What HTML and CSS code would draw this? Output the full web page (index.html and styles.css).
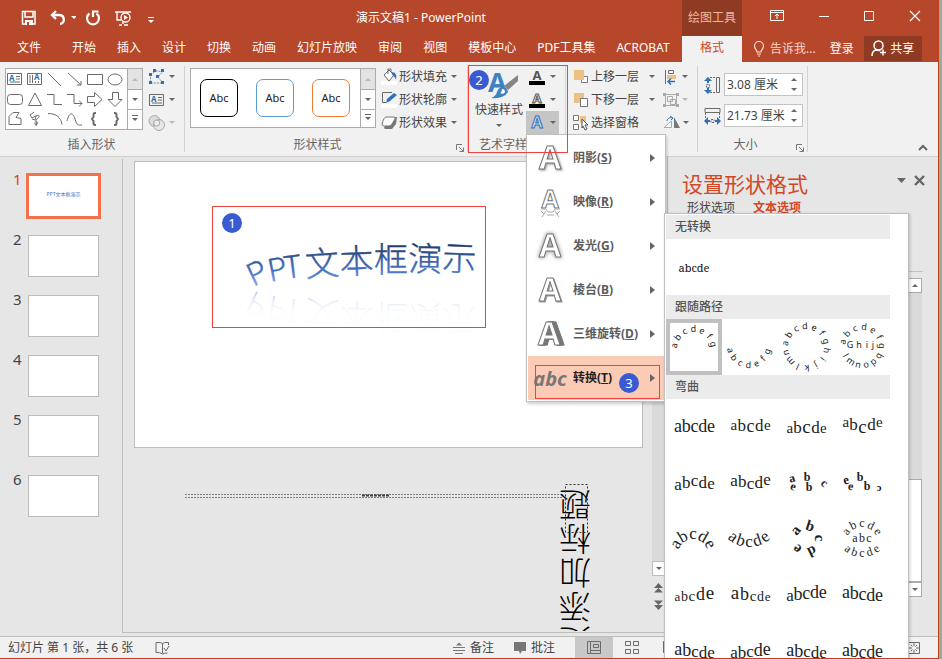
FILE: index.html
```html
<!DOCTYPE html>
<html lang="zh-CN">
<head>
<meta charset="utf-8">
<title>演示文稿1 - PowerPoint</title>
<link rel="stylesheet" href="styles.css">
</head>
<body>
<div class="app">
  <header class="header">
    <div class="header-main">
      <div class="title-row">
        <div class="quick-access">
          <button aria-label="保存"><svg width="16" height="16" viewBox="0 0 16 16"><path d="M1.500 1.500h12.500v12.500h-12.500zM4 2v5h8V2" fill="none" stroke="#fff" stroke-width="1.500"/><path d="M4 10h8v5H4z" fill="#fff"/><path d="M6 12h2v3H6z" fill="#b7472a"/></svg></button>
          <button class="wide" aria-label="撤消"><svg width="26" height="16" viewBox="0 0 26 16"><path d="M6 1 2 5l4 4M2.500 5H9c6 0 6.500 8 1 9" fill="none" stroke="#fff" stroke-width="2.300"/><path d="M21 6h6l-3 3z" fill="#fff"/></svg></button>
          <button aria-label="重复"><svg width="16" height="16" viewBox="0 0 16 16"><path d="M4.500 3.500a6 6 0 1 0 7 0M8 7V1.500h5.500" fill="none" stroke="#fff" stroke-width="2.200"/></svg></button>
          <button aria-label="从头开始"><svg width="18" height="17" viewBox="0 0 18 17"><path d="M1 2h16M3 2v8h4M9 10v4M5 15h3M10 15h4" stroke="#fff" stroke-width="1.400" fill="none"/><circle cx="11.500" cy="7.500" r="4.500" fill="#b7472a" stroke="#fff" stroke-width="1.300"/><path d="m10 5 4 2.500-4 2.500z" fill="#fff"/></svg></button>
          <button class="more" aria-label="自定义快速访问工具栏"><svg width="8" height="8" viewBox="0 0 8 8"><path d="M1 1.500h6" stroke="#fff"/><path d="M1 4h6L4 7z" fill="#fff"/></svg></button>
        </div>
        <div class="title">演示文稿1 - PowerPoint</div>
      </div>
      <nav class="tabs">
        <a href="#file" class="file">文件</a><a href="#home">开始</a><a href="#insert">插入</a><a href="#design">设计</a><a href="#transition">切换</a><a href="#animation">动画</a><a href="#show">幻灯片放映</a><a href="#review">审阅</a><a href="#view">视图</a><a href="#templates">模板中心</a><a href="#pdf">PDF工具集</a><a href="#acrobat">ACROBAT</a>
      </nav>
    </div>
    <div class="context">
      <div class="context-title">绘图工具</div>
      <a href="#format" class="context-tab">格式</a>
    </div>
    <div class="header-side">
      <div class="window-buttons">
        <button aria-label="功能区显示选项"><svg width="14" height="12" viewBox="0 0 14 12"><path d="M.5.5h13v10H.5zM1 2.500h12M7 9V4M5 6l2-2 2 2" fill="none" stroke="#fff"/></svg></button>
        <button aria-label="最小化"><svg width="12" height="12" viewBox="0 0 12 12"><path d="M1 6.500h10" stroke="#fff"/></svg></button>
        <button aria-label="最大化"><svg width="12" height="12" viewBox="0 0 12 12"><path d="M1.500 1.500h9v9h-9z" fill="none" stroke="#fff"/></svg></button>
        <button aria-label="关闭"><svg width="12" height="12" viewBox="0 0 12 12"><path d="m1 1 10 10M11 1 1 11" stroke="#fff" stroke-width="1.200"/></svg></button>
      </div>
      <div class="account">
        <button class="tell"><svg width="12" height="16" viewBox="0 0 12 16"><path d="M4 11C4 9 1.500 8 1.500 5a4.500 4.500 0 0 1 9 0C10.500 8 8 9 8 11zM4 13h4M5 15h2" fill="none" stroke="#fbe0d6" stroke-width="1.200"/></svg>告诉我...</button>
        <a href="#login" class="login">登录</a>
        <button class="share"><svg width="16" height="17" viewBox="0 0 16 17"><circle cx="7.500" cy="5.500" r="4.500" fill="none" stroke="#fff" stroke-width="1.500"/><path d="M1 16c0-4 2-6 5-6 1.500 0 2.500.5 3 1M12 9.500v6M9 12.500h6" fill="none" stroke="#fff" stroke-width="1.500"/></svg>共享</button>
      </div>
    </div>
  </header>

  <section class="ribbon">
    <div class="group g-shapes">
      <div class="group-body">
        <div class="gallery-box">
          <div class="shape-grid">
            <button aria-label="文本框"><svg viewBox="0 0 18 18"><path d="M1.500 3.500h14v11h-14zM10 6.500h4M10 9h4M4 12h10" class="ln"/><text x="3" y="11" class="blue-a">A</text></svg></button>
            <button aria-label="竖排文本框"><svg viewBox="0 0 18 18"><path d="M1.500 3.500h14v11h-14zM4 5v8M6.500 5v8M9.500 11v2M12.500 11v2" class="ln"/><text x="8" y="10" class="blue-a">A</text></svg></button>
            <button aria-label="直线"><svg viewBox="0 0 18 18"><path d="m2 3 13 13" class="ln"/></svg></button>
            <button aria-label="箭头"><svg viewBox="0 0 18 18"><path d="m2 3 13 12M15 11v4h-4" class="ln"/></svg></button>
            <button aria-label="矩形"><svg viewBox="0 0 18 18"><path d="M1.500 4.500h15v10h-15z" class="ln"/></svg></button>
            <button aria-label="椭圆"><svg viewBox="0 0 18 18"><ellipse cx="9" cy="9.500" rx="7" ry="5.500" class="ln"/></svg></button>
            <button aria-label="圆角矩形"><svg viewBox="0 0 18 18"><rect x="1.500" y="4.500" width="15" height="10" rx="3" class="ln"/></svg></button>
            <button aria-label="三角形"><svg viewBox="0 0 18 18"><path d="M9 3 2.500 15.500h13z" class="ln"/></svg></button>
            <button aria-label="肘形连接符"><svg viewBox="0 0 18 18"><path d="M1 4.500h7v10h8" class="ln"/></svg></button>
            <button aria-label="肘形箭头"><svg viewBox="0 0 18 18"><path d="M1 4.500h7v9h8M13 10.500l3 3-3 3" class="ln"/></svg></button>
            <button aria-label="右箭头"><svg viewBox="0 0 18 18"><path d="M1.500 6.500h7V2.500l7.500 7-7.500 7v-4h-7z" class="ln"/></svg></button>
            <button aria-label="下箭头"><svg viewBox="0 0 18 18"><path d="M6.500 2.500h6v7h3.500l-7 7-7-7h4.500z" class="ln"/></svg></button>
            <button aria-label="任意多边形"><svg viewBox="0 0 18 18"><path d="M3 14.500v-8l4-4h6l-3 5 5 1v6z" class="ln"/></svg></button>
            <button aria-label="自由曲线"><svg viewBox="0 0 18 18"><path d="M8 2 4 5l2 3 4-2-1 4-3-1M10 6c4-2 4 1 1 3s1 3 1 4-4 3-3 0 2-1 1 3" class="ln"/></svg></button>
            <button aria-label="弧线"><svg viewBox="0 0 18 18"><path d="M2 3.500c7 0 13 3 14 11" class="ln"/></svg></button>
            <button aria-label="曲线"><svg viewBox="0 0 18 18"><path d="M1 11c2-9 6-9 8-2s3 6 7 6" class="ln"/></svg></button>
            <button aria-label="左大括号"><svg viewBox="0 0 18 18"><path d="M10 3H9Q7.500 3 7.500 5v2L6 9l1.500 2v2q0 2 1.500 2h1" class="ln brace"/></svg></button>
            <button aria-label="右大括号"><svg viewBox="0 0 18 18"><path d="M8 3h1q1.500 0 1.500 2v2L12 9l-1.500 2v2q0 2-1.500 2H8" class="ln brace"/></svg></button>
          </div>
          <div class="stepper"><button class="off" aria-label="上一行"><i class="up"></i></button><button aria-label="下一行"><i class="down"></i></button><button aria-label="其他形状"><i class="down bar"></i></button></div>
        </div>
        <div class="tool-col">
          <button aria-label="编辑形状"><svg width="18" height="18" viewBox="0 0 18 18"><path d="M2.500 6.500 8 3l7 .5L10 9l5 6H2.500z" fill="none" stroke="#888" stroke-dasharray="2 1"/><path d="M1 5h3v3H1zM5 1h3v3H5zM13 1h3v3h-3zM8 7h3v3H8zM1 13h3v3H1zM13 13h3v3h-3z" fill="#2f72b5"/></svg><i class="down"></i></button>
          <button aria-label="文本框"><svg width="18" height="18" viewBox="0 0 18 18"><path d="M1.500 3.500h14v11h-14zM10 6.500h4M10 9h4M4 12h10" class="ln"/><text x="3" y="11" class="blue-a">A</text></svg><i class="down"></i></button>
          <button aria-label="合并形状"><svg width="18" height="18" viewBox="0 0 18 18"><circle cx="6.500" cy="7" r="5.500" fill="#dcdade" stroke="#aaa"/><circle cx="11" cy="11" r="5.500" fill="#e6e1e6" fill-opacity=".7" stroke="#aaa"/><circle cx="8.700" cy="9" r="3" fill="#eee" stroke="#aaa"/></svg><i class="down pale"></i></button>
        </div>
      </div>
      <h2>插入形状</h2>
    </div>
    <div class="group g-styles">
      <div class="group-body">
        <div class="gallery-box">
          <div class="style-list"><button class="abc black">Abc</button><button class="abc blue">Abc</button><button class="abc orange">Abc</button></div>
          <div class="stepper"><button class="off" aria-label="上一行"><i class="up"></i></button><button aria-label="下一行"><i class="down"></i></button><button aria-label="其他样式"><i class="down bar"></i></button></div>
        </div>
        <div class="command-col">
          <button><svg width="17" height="17" viewBox="0 0 17 17"><path d="M0 13h16v4H0z" fill="#fff"/><path d="m3 7 5-5 5 5-5 6zM7 6V1h3v3" fill="#fff" stroke="#666"/><path d="M10 4c5 0 6 3 5 8-1-3-2-4-3-4z" fill="#2f72b5"/></svg>形状填充<i class="down"></i></button>
          <button><svg width="17" height="17" viewBox="0 0 17 17"><path d="M0 13h16v4H0z" fill="#fff"/><path d="M11 1.500H1.500v10H5" class="ln"/><path d="m5 12 1-4 7-6 3 2-7 6z" fill="#2f72b5"/></svg>形状轮廓<i class="down"></i></button>
          <button><svg width="17" height="17" viewBox="0 0 17 17"><path d="m3 14 1-2 9-9h3l-1 7-4 5H4z" fill="#777"/><path d="M1 10q2-7 4-7h8q2 0 1 2l-3 5q-1 2-3 2H3q-2 0-2-2z" fill="#fff" stroke="#777"/></svg>形状效果<i class="down"></i></button>
        </div>
      </div>
      <h2>形状样式</h2><button class="launcher" aria-label="设置形状格式"><svg width="8" height="8" viewBox="0 0 8 8"><path d="M.5 6V.5H6M3 3l4 4M7.500 3.500v4h-4" fill="none" stroke="#777"/></svg></button>
    </div>
    <div class="group g-art">
      <div class="group-body">
        <button class="quick-style"><svg width="40" height="32" viewBox="0 0 40 32"><text x="9" y="23" class="art-a">A</text><path d="M39 6v6L29 21l-4-4z" fill="#858585"/><path d="M23 18q5 0 6 5-4 7-17 6 5-2 6-6 1-4 5-5z" fill="#3f82c0"/><path d="M23 20q3 0 3 3-1 3-5 1 2-1 2-4z" fill="#fff"/></svg><span>快速样式</span><i class="down"></i></button>
        <div class="art-col">
          <button aria-label="文本填充"><svg width="16" height="17" viewBox="0 0 16 17"><text x="8" y="12" class="fill-a">A</text><path d="M0 13h16v4H0z"/></svg><i class="down"></i></button>
          <button aria-label="文本轮廓"><svg width="16" height="17" viewBox="0 0 16 17"><text x="8" y="12" class="line-a">A</text><path d="M0 13h16v4H0z"/></svg><i class="down"></i></button>
          <button class="active" aria-label="文本效果"><svg width="16" height="17" viewBox="0 0 16 17"><text x="8" y="14" class="glow-a">A</text></svg><i class="down"></i></button>
        </div>
      </div>
      <h2>艺术字样式</h2>
    </div>
    <div class="group g-arrange">
      <div class="group-body">
        <div class="command-col">
          <button><svg width="16" height="16" viewBox="0 0 16 16"><path d="M8.500 7.500h6v6h-6z" fill="#fff" stroke="#777"/><path d="M1 1h10v10H1z" fill="#ecc183"/></svg>上移一层<i class="down"></i></button>
          <button><svg width="16" height="16" viewBox="0 0 16 16"><path d="M1 1h10v10H1z" fill="#ecc183"/><path d="M7.500 6.500h7v8h-7z" fill="#fff" stroke="#777"/></svg>下移一层<i class="down"></i></button>
          <button><svg width="16" height="16" viewBox="0 0 16 16"><path d="M.5.5h5v5h-5zM.5 9.500h5v5h-5z" fill="#fff" stroke="#777"/><path d="M7 1h6v7H7z" fill="#ecc183"/><path d="m9 4 6 6h-3l2 4-2 1-2-4-1 2z" fill="#fff" stroke="#555"/></svg>选择窗格</button>
        </div>
        <div class="tool-col">
          <button aria-label="对齐"><svg width="16" height="16" viewBox="0 0 16 16"><path d="M2.500 1v14M5.500 1.500h5v3h-5z" class="ln"/><path d="M4 6h9v4H4z" fill="#ecc183"/><path d="M12 12.500H5m3-3-3 3 3 3" fill="none" stroke="#2f72b5" stroke-width="1.500"/></svg><i class="down"></i></button>
          <button aria-label="组合"><svg width="16" height="16" viewBox="0 0 16 16"><path d="M2.500 2.500h11v11h-11zM4.500 4.500h5v5h-5zM7.500 7.500h5v5h-5z" fill="none" stroke="#aaa"/><path d="M0 1h3v3H0zM13 1h3v3h-3zM0 12h3v3H0zM13 12h3v3h-3z" fill="#aaa"/></svg><i class="down pale"></i></button>
          <button aria-label="旋转"><svg width="17" height="16" viewBox="0 0 17 16"><path d="M1 12.500h7.500V6z" fill="#fff" stroke="#aaa"/><path d="M11 13V2l6 11z" fill="#777"/><path d="M4 6c0-3 4-4 5-3M7 1l3 2-2 2" fill="none" stroke="#2f72b5"/></svg><i class="down"></i></button>
        </div>
      </div>
    </div>
    <div class="group g-size">
      <div class="group-body size-body">
        <div class="field"><label for="h" aria-label="高度"><svg width="17" height="18" viewBox="0 0 17 18"><path d="M12.500 1.500h3v15h-3z" class="ln"/><path d="M2.500 8.500h3v3h-3zM6 1.500h5M6 16.500h5" class="ln" stroke-dasharray="2 1"/><path d="M4 1 0 5h3v2h2V5h3zM4 18l-4-4h3v-2h2v2h3z" fill="#2f72b5"/></svg></label><div class="spin"><input id="h" type="text" value="3.08 厘米"><span><button aria-label="增加高度"><i class="up"></i></button><button aria-label="减小高度"><i class="down"></i></button></span></div></div>
        <div class="field"><label for="w" aria-label="宽度"><svg width="17" height="18" viewBox="0 0 17 18"><path d="M1 1.500h15v4H1z" class="ln"/><path d="M7 12.500h3v3H7zM1.500 6v5M15.500 6v5" class="ln" stroke-dasharray="2 1"/><path d="m0 14 4-4v3h2v2H4v3zM17 14l-4-4v3h-2v2h2v3z" fill="#2f72b5"/></svg></label><div class="spin"><input id="w" type="text" value="21.73 厘米"><span><button aria-label="增加宽度"><i class="up"></i></button><button aria-label="减小宽度"><i class="down"></i></button></span></div></div>
      </div>
      <h2>大小</h2><button class="launcher" aria-label="大小和位置"><svg width="8" height="8" viewBox="0 0 8 8"><path d="M.5 6V.5H6M3 3l4 4M7.500 3.500v4h-4" fill="none" stroke="#777"/></svg></button>
    </div>
    <button class="collapse" aria-label="折叠功能区"><svg width="10" height="8" viewBox="0 0 10 8"><path d="m1 6 4-4 4 4" fill="none" stroke="#666" stroke-width="2"/></svg></button>
  </section>

  <main class="workspace">
    <aside class="thumbs">
      <a href="#s1" class="thumb current"><b>1</b><span>PPT文本框演示</span></a>
      <a href="#s2" class="thumb"><b>2</b><span></span></a>
      <a href="#s3" class="thumb"><b>3</b><span></span></a>
      <a href="#s4" class="thumb"><b>4</b><span></span></a>
      <a href="#s5" class="thumb"><b>5</b><span></span></a>
      <a href="#s6" class="thumb"><b>6</b><span></span></a>
    </aside>
    <section class="stage">
      <div class="canvas">
        <div class="slide"></div>
        <svg class="art" width="518" height="472" viewBox="134 159 518 472">
          <defs>
            <linearGradient id="ink" gradientUnits="userSpaceOnUse" x1="0" y1="242" x2="0" y2="290"><stop offset="0" stop-color="#1f3864"/><stop offset=".6" stop-color="#4472c4"/><stop offset="1" stop-color="#9db8e8"/></linearGradient>
            <linearGradient id="fade" gradientUnits="userSpaceOnUse" x1="0" y1="287" x2="0" y2="264"><stop offset="0" stop-color="#4472c4" stop-opacity=".4"/><stop offset=".5" stop-color="#4472c4" stop-opacity=".12"/><stop offset="1" stop-color="#4472c4" stop-opacity=".02"/></linearGradient>
          </defs>
          <text class="word" fill="url(#ink)" stroke="url(#ink)" x="253 270 285 306 340 374 408 442" y="287 282 279 277 274 272 271 270" rotate="-25 -11 -7 -4 -2 0 1 2"><tspan class="latin">PPT</tspan>文本框演示</text>
          <g transform="matrix(1 0 0 -1 0 577)"><text class="word" aria-hidden="true" fill="url(#fade)" x="253 270 285 306 340 374 408 442" y="287 282 279 277 274 272 271 270" rotate="-25 -11 -7 -4 -2 0 1 2"><tspan class="latin">PPT</tspan>文本框演示</text></g>
          <path d="M185.500 494.500h376M185.500 497.500h376v-3" fill="none" stroke="#111" stroke-dasharray="1 2"/>
          <path d="M362 495.500h28" stroke="#444" stroke-width="2" stroke-dasharray="3 1"/>
          <text class="flipped" x="591 591 591 591 591" y="493 527 561 595 629" rotate="180">题标加添处</text>
          <path d="M565.500 484.500h22v48h-22z" fill="none" stroke="#333" stroke-dasharray="2 2"/>
        </svg>
      </div>
      <div class="stage-scroll"><div class="track"></div><button aria-label="向下滚动"><i class="down"></i></button><button class="jump" aria-label="上一张幻灯片"><svg width="9" height="10" viewBox="0 0 9 10"><path d="m0 5 4.500-5L9 5zM0 9.500 4.500 5 9 9.500z" fill="#666"/></svg></button><button class="jump" aria-label="下一张幻灯片"><svg width="9" height="10" viewBox="0 0 9 10"><path d="M0 .5h9L4.500 5zM0 5h9L4.500 10z" fill="#666"/></svg></button></div>
    </section>
    <aside class="pane">
      <div class="pane-head"><h1>设置形状格式</h1><button aria-label="任务窗格选项"><svg width="9" height="5" viewBox="0 0 9 5"><path d="M0 0h9L4.500 5z" fill="#666"/></svg></button><button aria-label="关闭"><svg width="11" height="11" viewBox="0 0 11 11"><path d="m1 1 9 9M10 1l-9 9" stroke="#666" stroke-width="2.400"/></svg></button></div>
      <nav class="pane-tabs"><a href="#shape">形状选项</a><a href="#text" class="on">文本选项</a></nav>
      <hr>
      <div class="pane-scroll"><button aria-label="向上"><i class="up"></i></button><div class="track"></div><div class="grip"></div><button aria-label="向下"><i class="down"></i></button></div>
    </aside>
  </main>

  <footer class="status">
    <span>幻灯片 第 1 张，共 6 张</span>
    <button aria-label="拼写检查"><svg width="15" height="14" viewBox="0 0 15 14"><path d="M7.500 12.500V2.500Q6 1 1 1.500v10q4-.5 6.500 1.500 2-1 5-1M7.500 2.500Q9 1 13.500 1.500V4M9 7l2 3 3-5" class="ln"/></svg></button>
    <div class="status-side">
      <button><svg width="12" height="12" viewBox="0 0 12 12"><path d="M0 5.500h12M0 8.500h12M2 11.500h8" stroke="#777"/><path d="m3 3.500 3-3 3 3z" fill="#777"/></svg>备注</button>
      <button><svg width="12" height="12" viewBox="0 0 12 12"><path d="M0 0h12v9H8l-2 3-1-3H0z" fill="#777"/></svg>批注</button>
      <button class="view on" aria-label="普通视图"><svg width="14" height="13" viewBox="0 0 14 13"><path d="M.5.5h13v12H.5zM3.500.5v12M3.500 9.500h10M6.500 3.500h5v3h-5z" class="ln"/></svg></button>
      <button class="view" aria-label="幻灯片浏览"><svg width="14" height="13" viewBox="0 0 14 13"><path d="M.5.5h5v4h-5zM8.500.5h5v4h-5zM.5 8.500h5v4h-5zM8.500 8.500h5v4h-5z" class="ln"/></svg></button>
      <button class="view" aria-label="阅读视图"><svg width="14" height="13" viewBox="0 0 14 13"><path d="M.5.5h13v11H.5z" class="ln"/></svg></button>
      <button class="fit" aria-label="适应窗口"><svg width="12" height="12" viewBox="0 0 12 12"><path d="M.5.5h11v11H.5zM6 1v3M6 8v3M1 6h3M8 6h3M3 3l1.500 1.500M9 3 7.500 4.500M3 9l1.500-1.500M9 9 7.500 7.500" class="ln"/></svg></button>
    </div>
  </footer>

  <div class="effects" role="menu">
    <button role="menuitem"><svg viewBox="0 0 36 36"><text x="18" y="29" class="big shade">A</text></svg><span>阴影(<u>S</u>)</span><i class="right"></i></button>
    <button role="menuitem"><svg viewBox="0 0 36 36"><text x="18" y="24" class="big mid">A</text><path d="M9 25h5l2 3h5l2-3h5M9 27l3 3 2-3M28 27l-3 3-2-3M12 30l-2 3M25 30l2 3M15 31h7" fill="none" stroke="#aaa"/></svg><span>映像(<u>R</u>)</span><i class="right"></i></button>
    <button role="menuitem"><svg viewBox="0 0 36 36"><text x="18" y="29" class="big glow">A</text></svg><span>发光(<u>G</u>)</span><i class="right"></i></button>
    <button role="menuitem"><svg viewBox="0 0 36 36"><text x="18" y="29" class="big bevel">A</text></svg><span>棱台(<u>B</u>)</span><i class="right"></i></button>
    <button role="menuitem"><svg viewBox="0 0 36 36"><text x="17" y="29" class="big solid">A</text></svg><span>三维旋转(<u>D</u>)</span><i class="right"></i></button>
    <button role="menuitem" class="on"><svg viewBox="0 0 36 36"><text x="18" y="26" class="abc-icon">abc</text></svg><span>转换(<u>T</u>)</span><i class="right"></i></button>
  </div>

  <div class="warps">
    <h3>无转换</h3>
    <div class="cells"><button class="plain">abcde</button></div>
    <h3>跟随路径</h3>
    <div class="cells" id="paths"></div>
    <h3>弯曲</h3>
    <div class="cells" id="bends"></div>
  </div>

  <div class="mark m1"><b>1</b></div>
  <div class="mark m2"><b>2</b></div>
  <div class="mark m3"><b>3</b></div>
</div>
<script src="warps.js"></script>
</body>
</html>
```
FILE: warps.js
```js
// Each glyph is [character, x, y, size, rotation, weight] inside a 56-unit cell.
const ring = (chars, cx, cy, r, start, step, size, below, weight) =>
  [...chars].map((ch, i) => {
    const deg = start + i * step;
    const t = deg * Math.PI / 180;
    return [ch, cx + r * Math.sin(t), cy - r * Math.cos(t), size, below ? deg - 180 : deg, weight];
  });

const row = (sizes, ys, chars = 'abcde', left = 8) => {
  const total = sizes.reduce((a, b) => a + b, 0);
  let x = left;
  return [...chars].map((ch, i) => {
    const w = sizes[i] / total * 41;
    x += w;
    return [ch, x - w / 2, ys[i], sizes[i], 0];
  });
};

const paths = [
  ring('abcdefg', 28, 30, 17, -80, 26, 9),
  ring('abcdefg', 27, 27, 22, 257, -25, 9, true),
  ring('abcdefghijklmn', 28, 28, 18, -80, 25.7, 9),
  [...ring('abcdefg', 28, 28, 17, -75, 27, 9), ...ring('lmnopq', 28, 27, 22, 240, -24, 9, true),
    ['G', 16, 29, 9, 0], ['h', 25, 29, 9, 0], ['i', 33, 29, 9, 0], ['j', 39, 29, 9, 0]]
];

const bends = [
  row([18, 18, 18, 18, 18], [33, 33, 33, 33, 33]),
  row([15, 17, 18, 17, 15], [31, 32, 33, 32, 31]),
  row([15, 17, 19, 17, 15], [34, 34, 34, 34, 34]),
  row([15, 17, 19, 17, 15], [28, 31, 34, 31, 28]),
  row([17, 17, 17, 17, 17], [35, 33, 31, 33, 34]),
  row([17, 17, 17, 17, 17], [31, 32, 34, 33, 30]),
  [['a', 15, 27, 12, -15, 700], ['b', 29, 26, 12, 0, 700], ['c', 44, 31, 12, 40, 700], ['e', 14, 35, 12, 20, 700], ['b', 31, 36, 12, 0, 700]],
  [['e', 13, 29, 13, -15, 700], ['b', 26, 26, 12, 0, 700], ['e', 16, 35, 12, 10, 700], ['b', 33, 35, 12, 0, 700], ['c', 45, 31, 11, 180, 700]],
  ring('abcde', 27, 43, 15, -60, 30, 17),
  ring('abcde', 27, 5, 31, 217, -18.5, 17, true),
  ring('abcde', 28, 28, 9, -50, 68, 15, false, 700),
  [...ring('abcde', 28, 32, 16, -54, 27, 12), ['a', 21, 31, 12, 0], ['b', 28, 31, 12, 0], ['c', 35, 31, 12, 0], ...ring('abcde', 28, 19, 27, 217, -18.5, 12, true)],
  row([13, 14, 15, 18, 19], [34, 34, 34, 33, 32]),
  row([19, 18, 15, 14, 13], [32, 33, 34, 34, 34]),
  row([17, 18, 18, 18, 18], [34, 33, 32, 31, 31]),
  row([18, 18, 18, 18, 18], [31, 32, 33, 34, 34]),
  row([18, 18, 17, 17, 17], [32, 33, 34, 35, 35]),
  row([17, 17, 17, 18, 18], [35, 35, 34, 33, 32]),
  row([18, 18, 17, 17, 17], [33, 34, 34, 35, 35]),
  row([18, 18, 18, 18, 18], [33, 34, 35, 35, 34])
];

const NS = 'http://www.w3.org/2000/svg';
const draw = (id, items, font) => {
  const host = document.getElementById(id);
  items.forEach((glyphs, n) => {
    const button = document.createElement('button');
    if (id === 'paths' && n === 0) button.className = 'picked';
    const svg = document.createElementNS(NS, 'svg');
    svg.setAttribute('viewBox', '0 0 56 56');
    svg.setAttribute('class', font);
    glyphs.forEach(([ch, x, y, size, turn, weight]) => {
      const t = document.createElementNS(NS, 'text');
      t.textContent = ch;
      t.setAttribute('font-size', size);
      if (weight) t.setAttribute('font-weight', weight);
      t.setAttribute('transform', `translate(${x} ${y}) rotate(${turn})`);
      svg.append(t);
    });
    button.append(svg);
    host.append(button);
  });
};
draw('paths', paths, 'sans');
draw('bends', bends, 'serif');
```
FILE: styles.css
```css
* { box-sizing: border-box; }
body { margin: 0; overflow: hidden; background: #9aab9c; font: 12px/16px "Noto Sans", "Noto Sans CJK SC", sans-serif; color: #444; }
button { display: flex; align-items: center; padding: 0; border: 0; background: none; font: inherit; color: inherit; }
a { color: inherit; text-decoration: none; }
h1, h2, h3 { margin: 0; font-weight: 400; }
svg { display: block; flex: none; }
.ln { fill: none; stroke: #6b6b6b; }
.brace { stroke-width: 2; }
.blue-a { font-size: 8px; font-weight: 700; fill: #2f72b5; }

.app { position: relative; display: flex; flex-direction: column; height: 100vh; margin-right: 3px; border-right: 1px solid #c43e1c; border-bottom: 1px solid #c43e1c; background: #e6e6e6; overflow: hidden; }

/* small triangles */
i { display: block; width: 0; height: 0; border: 3px solid transparent; flex: none; }
i.down { border-top-color: #666; border-bottom-width: 0; }
i.up { border-bottom-color: #666; border-top-width: 0; }
i.right { border-width: 4px 0 4px 5px; border-left-color: #666; }
i.pale { border-top-color: #bbb; }
i.bar { position: relative; }
i.bar::before { content: ""; position: absolute; left: -3px; top: -6px; width: 6px; height: 1px; background: #666; }

/* header */
.header { display: flex; height: 62px; flex: none; background: #b7472a; color: #fff; }
.header-main { flex: 1; }
.title-row { display: grid; grid-template-columns: 160px 1fr; align-items: center; height: 36px; }
.title { text-align: center; }
.quick-access { display: flex; align-items: center; gap: 13px; padding-left: 21px; height: 32px; }
.quick-access .wide { margin-right: -4px; }
.quick-access .more { margin: 4px 0 0 2px; }
.tabs { display: flex; gap: 21px; padding: 0 0 0 17px; height: 26px; line-height: 24px; white-space: nowrap; }
.tabs .file { margin-right: 10px; }
.context { width: 60px; text-align: center; }
.context-title { height: 36px; line-height: 36px; background: #8f3a22; color: #f0b8a4; }
.context-tab { display: block; height: 26px; line-height: 24px; background: #f1f1f1; color: #d24726; }
.header-side { width: 196px; }
.window-buttons { display: flex; justify-content: space-between; align-items: center; height: 32px; padding: 0 17px 0 28px; }
.account { display: flex; align-items: center; margin-top: 4px; height: 25px; }
.tell { gap: 5px; margin-left: 11px; color: #f8d6ca; white-space: nowrap; }
.login { margin-left: 14px; }
.share { margin-left: 10px; width: 58px; height: 25px; justify-content: center; gap: 3px; background: #8f3a22; }

/* ribbon */
.ribbon { display: flex; height: 95px; flex: none; padding: 4px 0; background: #f1f1f1; border-bottom: 1px solid #d2d2d2; white-space: nowrap; }
.group { position: relative; display: flex; flex-direction: column; border-right: 1px solid #d2d2d2; height: 86px; }
.group-body { display: flex; flex: none; height: 70px; }
.group h2 { text-align: center; font-size: 12px; line-height: 16px; margin-top: 1px; color: #666; }
.g-shapes { width: 185px; padding: 0 0 0 5px; }
.g-styles { width: 283px; padding-left: 5px; }
.g-styles h2 { padding-right: 22px; }
.g-shapes h2 { padding-right: 6px; }
.g-art { width: 98px; padding-left: 6px; overflow: hidden; }
.g-art h2 { padding-left: 5px; text-align: left; }
.g-arrange { width: 132px; padding-left: 7px; }
.g-size { width: 110px; padding-left: 6px; }
.launcher { position: absolute; right: 3px; bottom: 0; }
.g-size h2 { padding-right: 20px; }
.gallery-box { display: flex; margin-top: 2px; height: 62px; border: 1px solid #ababab; background: #fff; }
.shape-grid { display: grid; grid-template-columns: repeat(6, 20px); grid-auto-rows: 20px; width: 121px; }
.shape-grid svg { width: 18px; height: 18px; }
.stepper { display: grid; grid-template-rows: 20px 20px 1fr; width: 15px; border-left: 1px solid #ababab; }
.stepper button { justify-content: center; }
.stepper button + button { border-top: 1px solid #ababab; }
.stepper .off { background: #e3e3e3; }
.stepper .off i { border-bottom-color: #bbb; }
.tool-col { display: flex; flex-direction: column; margin: -1px 0 0 5px; }
.tool-col button { height: 23px; gap: 3px; }
.style-list { display: flex; gap: 18px; padding: 10px 9px; width: 169px; }
.g-styles .gallery-box { height: 60px; }
.abc { width: 38px; height: 38px; justify-content: center; border: 1px solid #000; border-radius: 7px; color: #222; font-size: 11px; }
.abc.blue { border-color: #5b9bd5; }
.abc.orange { border-color: #ed7d31; }
.command-col { display: flex; flex-direction: column; margin: -1px 0 0 5px; }
.command-col button { height: 23px; gap: 1px; }
.command-col i { margin-left: 3px; }
.g-arrange .command-col { margin: -1px 0 0 0; }
.g-arrange .command-col button { gap: 2px; }
.g-arrange .command-col i { margin-left: 8px; }
.g-arrange .tool-col { margin: -1px 0 0 8px; }
.quick-style { flex-direction: column; width: 50px; padding-top: 3px; }
.quick-style span { margin: 1px 0 6px; }
.art-a { font: 700 27px "Noto Sans", sans-serif; fill: #3f82c0; }
.fill-a, .line-a, .glow-a { font: 700 13px "Noto Sans", sans-serif; text-anchor: middle; fill: #555; }
.line-a { fill: #fff; stroke: #555; stroke-width: 1; }
.glow-a { font-size: 16px; fill: #cfe2f5; stroke: #2f72b5; stroke-width: 1; }
.art-col { display: flex; flex-direction: column; margin: -1px 0 0 2px; }
.art-col button { width: 33px; height: 23px; gap: 5px; padding-left: 3px; }
.art-col .active { background: #c5c5c5; }
.size-body { flex-direction: column; gap: 8px; padding-top: 7px; }
.field { display: flex; align-items: center; gap: 3px; }
.spin { display: flex; width: 79px; height: 23px; border: 1px solid #c3c3c3; background: #fff; }
.spin input { width: 62px; padding: 0 0 0 2px; border: 0; background: none; font: inherit; color: #444; outline: 0; }
.spin span { display: grid; width: 14px; justify-items: center; }
.collapse { margin: auto 10px 0 auto; }

/* workspace */
.workspace { display: flex; flex: 1; min-height: 0; }
.thumbs { width: 123px; padding-top: 16px; margin-top: 2px; border-right: 1px solid #bdbdbd; margin-bottom: 3px; }
.thumb { display: flex; height: 60px; }
.thumb b { width: 28px; padding-left: 13px; font-size: 15px; line-height: 16px; font-weight: 400; margin-top: -4px; }
.thumb span { width: 71px; height: 42px; margin-top: 0; background: #fff; border: 1px solid #bdbdbd; font-size: 5px; line-height: 36px; text-align: center; color: #4472c4; white-space: nowrap; }
.current b { width: 26px; color: #d24726; }
.current span { width: 75px; height: 46px; margin-top: -2px; border: 3px solid #f3714f; }
.stage { display: flex; flex: 1; min-width: 0; margin: 2px 0 3px; border-bottom: 1px solid #bdbdbd; padding-left: 11px; }
.canvas { position: relative; flex: 1; min-width: 0; overflow: hidden; }
.slide { width: 509px; height: 287px; margin-top: 2px; background: #fff; border: 1px solid #bdbdbd; }
.art { position: absolute; left: 0; top: 0; }
.word { font: 300 34px "Noto Sans CJK SC", sans-serif; stroke-width: .4; }
.latin { font-size: 31px; }
.flipped { font: 300 32px "Noto Sans CJK SC", sans-serif; fill: #000; }
.stage-scroll { display: flex; flex-direction: column; width: 13px; padding-bottom: 22px; gap: 7px; }
.track { flex: 1; background: #dadada; }
.stage-scroll .track { margin-bottom: -7px; }
.stage-scroll button { justify-content: center; height: 15px; background: #fff; border: 1px solid #bdbdbd; }
.stage-scroll .jump { height: 10px; border: 0; background: none; }
.pane { display: flex; flex-direction: column; width: 273px; border-left: 3px double #bdbdbd; }
.pane-head { display: flex; align-items: center; gap: 8px; padding: 13px 13px 0 14px; }
.pane h1 { flex: 1; font-size: 21px; line-height: 28px; color: #d24726; }
.pane-head button { margin-top: -8px; }
.pane-tabs { display: flex; gap: 18px; padding: 2px 0 0 19px; }
.pane-tabs .on { font-weight: 700; color: #d24726; }
.pane hr { width: 240px; margin: 55px 15px 6px auto; border: 0; border-top: 1px solid #c3c3c3; }
.pane-scroll { display: flex; flex-direction: column; width: 15px; flex: 1; margin: 0 16px 39px auto; }
.pane-scroll button { justify-content: center; height: 15px; background: #fff; border: 1px solid #ababab; }
.pane-scroll .grip { height: 103px; background: #fff; border: 1px solid #ababab; }

/* status bar */
.status { display: flex; align-items: center; height: 22px; flex: none; padding-left: 8px; gap: 22px; background: #f1f1f1; border-top: 1px solid #bdbdbd; white-space: nowrap; }
.status-side { display: flex; align-items: stretch; width: 485px; height: 21px; margin-left: auto; }
.status-side button { gap: 5px; margin-right: 20px; }
.status-side .view { width: 38px; margin: 0; justify-content: center; }
.status-side .on { background: #c8c8c8; }
.status-side .fit { margin: 0 18px 0 auto; }

/* text effects menu */
.effects { position: absolute; left: 526px; top: 134px; width: 140px; padding: 1px; background: #fff; border: 1px solid #c0c0c0; box-shadow: 1px 2px 3px #0003; }
.effects button { width: 100%; height: 44px; padding: 0 9px 0 4px; font-weight: 700; color: #5c5c5c; }
.effects svg { width: 36px; height: 36px; }
.effects span { flex: 1; padding-left: 5px; text-align: left; }
.effects .on { background: #fccbb5; color: #222; }
.big { font: 700 32px "Open Sans", sans-serif; text-anchor: middle; fill: #fff; stroke: #777; stroke-width: 1; }
.big.mid { font-size: 25px; }
.big.shade { filter: drop-shadow(1px 1px 1px #999); }
.big.glow { filter: drop-shadow(0 0 2px #888); }
.big.bevel { filter: drop-shadow(1px 1px 0 #999); }
.big.solid { filter: drop-shadow(2px 0 0 #777) drop-shadow(2px 0 0 #777); }
.abc-icon { font: italic 700 20px "Open Sans", sans-serif; text-anchor: middle; fill: #777; }

/* warp gallery */
.warps { position: absolute; left: 664px; top: 213px; bottom: -1px; width: 245px; padding: 1px; overflow: hidden; background: #fff; border: 1px solid #c0c0c0; box-shadow: 1px 1px 3px #0003; }
.warps h3 { width: 224px; height: 24px; padding-left: 9px; background: #ebebeb; font-size: 12px; line-height: 24px; font-weight: 500; color: #555; }
.cells { display: grid; grid-template-columns: repeat(4, 56px); grid-auto-rows: 56px; }
.cells svg { width: 56px; height: 56px; }
.cells text { text-anchor: middle; fill: #222; }
.plain { justify-content: center; font: 11px "Noto Serif", "DejaVu Serif", "Liberation Serif", serif; color: #111; }
.sans { font-family: "Noto Sans", sans-serif; }
.serif { font-family: "Liberation Serif", serif; }
.picked { box-shadow: inset 0 0 0 4px #c0c0c0; }

/* numbered callouts */
.mark { position: absolute; border: 1px solid #f2403c; pointer-events: none; }
.mark b { position: absolute; width: 20px; height: 20px; border-radius: 50%; background: #385bd2; color: #fff; font-size: 13px; line-height: 20px; font-weight: 400; text-align: center; }
.m1 { left: 212px; top: 206px; width: 274px; height: 122px; }
.m1 b { left: 9px; top: 6px; }
.m2 { left: 468px; top: 65px; width: 100px; height: 88px; }
.m2 b { left: 0; top: 4px; }
.m3 { left: 535px; top: 365px; width: 125px; height: 34px; }
.m3 b { left: 83px; top: 7px; }
```
